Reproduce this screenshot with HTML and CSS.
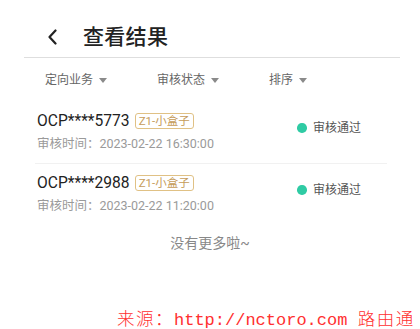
FILE: index.html
```html
<!DOCTYPE html>
<html lang="zh">
<head>
<meta charset="utf-8">
<link rel="stylesheet" href="styles.css">
</head>
<body>
<div class="page">
  <header class="nav">
    <span class="back"><svg width="10" height="16" viewBox="0 0 10 16"><polyline points="7.5,1.5 1.5,8 7.5,14.5" fill="none" stroke="#222" stroke-width="2.2" stroke-linecap="round" stroke-linejoin="round"/></svg></span>
    <h1 class="title">查看结果</h1>
  </header>
  <div class="filters">
    <div class="filter">定向业务<i class="tri"></i></div>
    <div class="filter">审核状态<i class="tri"></i></div>
    <div class="filter">排序<i class="tri"></i></div>
  </div>
  <ul class="list">
    <li class="item">
      <div class="info">
        <div class="row1"><span class="code">OCP****5773</span><span class="tag">Z1-小盒子</span></div>
        <div class="time">审核时间：2023-02-22 16:30:00</div>
      </div>
      <div class="status"><i class="dot"></i>审核通过</div>
    </li>
    <li class="item">
      <div class="info">
        <div class="row1"><span class="code">OCP****2988</span><span class="tag">Z1-小盒子</span></div>
        <div class="time">审核时间：2023-02-22 11:20:00</div>
      </div>
      <div class="status"><i class="dot"></i>审核通过</div>
    </li>
  </ul>
  <div class="end">没有更多啦~</div>
  <div class="watermark"><span class="cjk">来源：</span>http://nctoro.com <span class="cjk">路由通</span></div>
</div>
</body>
</html>
```
FILE: styles.css
```css
* { box-sizing: border-box; }
html, body { margin: 0; padding: 0; background: #fff; }
body {
  font-family: Roboto, "Noto Sans CJK SC", sans-serif;
  color: #222;
}
.page {
  position: relative;
  width: 420px;
  height: 329px;
  overflow: hidden;
}
.nav {
  display: flex;
  align-items: center;
  height: 58px;
  padding-top: 17px;
  margin: 0 20px 0 24px;
  border-bottom: 1.5px solid #dedede;
}
.back {
  display: flex;
  margin-left: 24px;
  width: 10px;
}
.title {
  margin: 0 0 0 25px;
  font-size: 21px;
  font-weight: 500;
  line-height: 28px;
  color: #222;
  letter-spacing: 0.3px;
}
.filters {
  display: flex;
  height: 44px;
  align-items: center;
  padding-left: 45px;
}
.filter {
  width: 112px;
  display: flex;
  align-items: center;
  font-size: 12px;
  color: #666;
  line-height: 16px;
}
.tri {
  display: block;
  margin-left: 6px;
  width: 0;
  height: 0;
  border-left: 4.5px solid transparent;
  border-right: 4.5px solid transparent;
  border-top: 5px solid #8a8a8a;
}
.list {
  list-style: none;
  margin: 0 33px 0 35px;
  padding: 0;
}
.item {
  display: flex;
  justify-content: space-between;
  align-items: flex-start;
  padding: 8px 26px 11px 2px;
  border-bottom: 1px solid #f1f1f1;
}
.item:last-child { border-bottom-color: transparent; }
.row1 {
  display: flex;
  align-items: center;
  height: 22px;
}
.code {
  font-size: 15.6px;
  color: #222;
  line-height: 22px;
}
.tag {
  margin-left: 5px;
  height: 16px;
  padding: 0 3px;
  border: 1px solid #e0c185;
  border-radius: 3px;
  color: #c59c5a;
  font-size: 11.5px;
  line-height: 14px;
}
.time {
  margin-top: 4px;
  font-size: 12.5px;
  line-height: 16px;
  color: #9a9a9a;
}
.status {
  display: flex;
  align-items: center;
  margin-top: 10px;
  font-size: 12px;
  line-height: 16px;
  color: #555;
}
.dot {
  display: block;
  width: 9.5px;
  height: 9.5px;
  border-radius: 50%;
  background: #2fcba4;
  margin-right: 6px;
}
.end {
  margin-top: 7px;
  text-align: center;
  font-size: 14px;
  line-height: 20px;
  color: #888;
}
.watermark {
  position: absolute;
  left: 117px;
  top: 308px;
  font-family: "Liberation Mono", "Noto Sans CJK SC", monospace;
  font-size: 17px;
  line-height: 20px;
  height: 20px;
  color: #ff3030;
  white-space: nowrap;
}
.cjk {
  font-family: "Noto Sans CJK SC", sans-serif;
  font-size: 17.5px;
  line-height: 20px;
  font-weight: 300;
  letter-spacing: 1.5px;
}
```
